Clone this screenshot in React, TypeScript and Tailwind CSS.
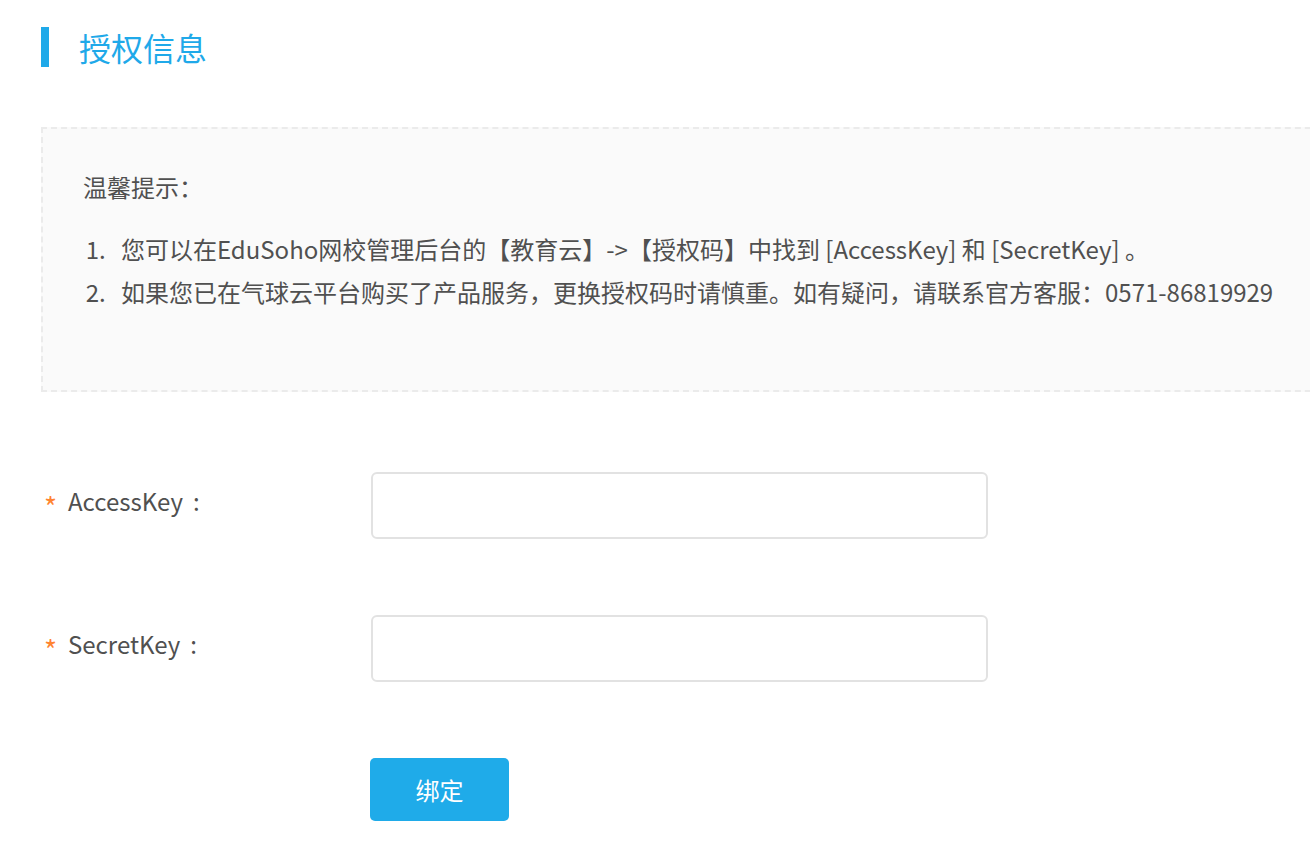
import React from 'react'

const tips = [
  '您可以在EduSoho网校管理后台的【教育云】->【授权码】中找到 [AccessKey] 和 [SecretKey] 。',
  '如果您已在气球云平台购买了产品服务，更换授权码时请慎重。如有疑问，请联系官方客服：0571-86819929',
]

function Field({ label }: { label: string }) {
  return (
    <div className="flex items-center">
      <div className="w-[330px] flex items-center pb-[10px] text-[24px] text-[#505050]">
        <span className="w-[27px] pl-[3px] text-[#ff8431] text-[28px] leading-none pt-[10px]">*</span>
        <span>{label}</span>
        <span className="ml-[10px]">:</span>
      </div>
      <input
        type="text"
        className="w-[617px] h-[67px] rounded-[6px] border-2 border-[#e2e2e2] bg-white px-4 text-[22px] outline-none"
      />
    </div>
  )
}

export default function App() {
  return (
    <div
      className="w-[1310px] h-[848px] overflow-hidden bg-white pl-[41px] pt-[27px]"
      style={{ fontFamily: '"Noto Sans CJK SC", "Noto Sans", sans-serif' }}
    >
      <div className="flex items-center h-[40px]">
        <div className="w-[8px] h-[40px] bg-[#1fa9e9]" />
        <h1 className="ml-[30px] text-[32px] leading-none text-[#1fa9e9]">授权信息</h1>
      </div>

      <div className="mt-[60px] w-[1320px] h-[265px] border-2 border-dashed border-[#ebebeb] bg-[#fafafa] pl-[40px] pt-[40px] text-[#505050]">
        <p className="text-[24px] leading-[36px]">温馨提示：</p>
        <ol className="mt-[22px] list-decimal pl-[28px] text-[24px] leading-[43px]">
          {tips.map((t) => (
            <li key={t} className="pl-[10px]">{t}</li>
          ))}
        </ol>
      </div>

      <div className="mt-[80px] flex flex-col gap-[76px]">
        <Field label="AccessKey" />
        <Field label="SecretKey" />
      </div>

      <div className="mt-[76px] pl-[329px]">
        <button className="w-[139px] h-[63px] rounded-[5px] bg-[#1fabe9] text-white text-[24px]">
          绑定
        </button>
      </div>
    </div>
  )
}
